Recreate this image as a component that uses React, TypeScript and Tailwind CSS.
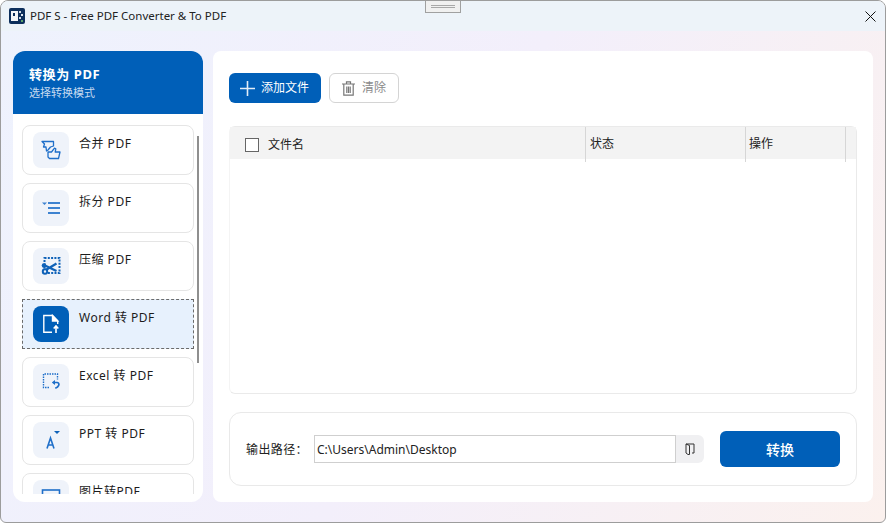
import React from "react";

const font = { fontFamily: '"Noto Sans", "Noto Sans CJK SC", sans-serif' };

const b = "#1f6fc9";

function MergeIcon() {
  return (
    <svg width="20" height="20" viewBox="0 0 20 20" fill="none" stroke={b} strokeWidth="1.300" strokeLinejoin="round">
      <path d="M1 1.500h11.500v4.500l-3 1-2.500 3-1.500 1-.5-4H2.500L3.500 4z" />
      <path d="M7 12h3.500l3-3.800 1.300.6-.6 3.200H19l-1.500 6.500H8.500L7 17z" />
    </svg>
  );
}
function SplitIcon() {
  return (
    <svg width="20" height="20" viewBox="0 0 20 20" fill={b} opacity="0.85">
      <path d="M1 4.500h5l-2.500 2.500z" />
      <rect x="7" y="4" width="12" height="2" />
      <rect x="7" y="9" width="12" height="2" />
      <rect x="7" y="14" width="12" height="2" />
    </svg>
  );
}
function CompressIcon() {
  return (
    <svg width="20" height="20" viewBox="0 0 20 20" fill="none">
      <rect x="3.500" y="2" width="15" height="15" stroke="#0f62b8" strokeWidth="2" strokeDasharray="2 1.300" />
      <path d="M4 14.500 15.500 7.500M4 9.500l11.500 5.500" stroke="#0f62b8" strokeWidth="2.200" />
      <circle cx="3" cy="9.500" r="2.300" fill="#0f62b8" />
      <circle cx="4" cy="15.500" r="2.200" fill="#eff3fa" stroke="#0f62b8" strokeWidth="2" />
    </svg>
  );
}
function WordIcon() {
  return (
    <svg width="20" height="20" viewBox="0 0 20 20" fill="none" stroke="#fff" strokeWidth="1.400">
      <path d="M11 18.300H2.800V1.500h8.700l5.200 5.200V10" />
      <path d="M11.500 1.500v5.500h5.200z" fill="#fff" />
      <path d="M15 19v-7M12.700 14.500l2.300-2.500 2.300 2.500" strokeWidth="1.600" />
    </svg>
  );
}
function ExcelIcon() {
  return (
    <svg width="20" height="20" viewBox="0 0 20 20" fill="none" stroke={b}>
      <path d="M8 15.500H2.500V2H16.500v5.500" strokeWidth="1.400" strokeDasharray="1.500 1" />
      <path d="M12.500 10.500h3.500a1.900 1.900 0 0 1 1.700 2.800c-.6 1.300-1.800 2.300-3.400 3" strokeWidth="1.700" />
      <path d="M14 8 10.800 10.500 14 13z" fill={b} stroke="none" />
    </svg>
  );
}
function PptIcon() {
  return (
    <svg width="20" height="20" viewBox="0 0 20 20" fill="none">
      <path d="M6 18.500 9.500 8 13 18.500M7 15h5" stroke={b} strokeWidth="1.600" />
      <path d="M13 1h6l-3 3z" fill="#0f62b8" />
    </svg>
  );
}
function ImageIcon() {
  return (
    <svg width="20" height="20" viewBox="0 0 20 20" fill="none" stroke={b} strokeWidth="1.600">
      <rect x="1.500" y="2" width="17" height="14" />
    </svg>
  );
}

const items: { label: string; icon: React.ReactNode; active?: boolean }[] = [
  { label: "合并 PDF", icon: <MergeIcon /> },
  { label: "拆分 PDF", icon: <SplitIcon /> },
  { label: "压缩 PDF", icon: <CompressIcon /> },
  { label: "Word 转 PDF", icon: <WordIcon />, active: true },
  { label: "Excel 转 PDF", icon: <ExcelIcon /> },
  { label: "PPT 转 PDF", icon: <PptIcon /> },
  { label: "图片转PDF", icon: <ImageIcon /> },
];

function Item({ label, icon, active }: { label: string; icon: React.ReactNode; active?: boolean }) {
  return (
    <div
      className={
        active
          ? "flex h-[50px] w-[172px] shrink-0 items-start gap-[10px] border border-dashed border-[#6b6b6b] bg-[#e7f1fd] pl-[10px] pt-[6px]"
          : "flex h-[50px] w-[172px] shrink-0 items-start gap-[10px] rounded-lg border border-[#e5e5e5] bg-white pl-[10px] pt-[6px]"
      }
    >
      <div
        className={
          active
            ? "flex h-9 w-9 shrink-0 items-center justify-center rounded-lg bg-[#005fb8]"
            : "flex h-9 w-9 shrink-0 items-center justify-center rounded-lg bg-[#eff3fa]"
        }
      >
        {icon}
      </div>
      <span className="mt-[2px] text-[12px] leading-[20px] tracking-[0.5px] text-[#1c1c1c]">{label}</span>
    </div>
  );
}

export default function App() {
  return (
    <div
      style={font}
      className="relative flex h-[523px] w-[886px] flex-col overflow-hidden rounded-t-lg rounded-b-md border border-[#9c9c9c] bg-[linear-gradient(115deg,#eef2fd_0%,#f3effb_50%,#fbf1ee_100%)]"
    >
      <div className="absolute left-[424px] top-[-1px] flex h-[13px] w-[36px] items-center justify-center border border-[#a0a0a0] bg-[#f0f0f0]">
        <div className="h-[3px] w-6 border-y border-[#a8a8a8]" />
      </div>

      <div className="flex h-[30px] shrink-0 items-center bg-[#edf3f9] pl-2 pr-[9px]">
        <svg width="16" height="16" viewBox="0 0 16 16" className="shrink-0">
          <rect width="16" height="16" rx="2" fill="#0d2f5c" />
          <rect x="2" y="3" width="7" height="10" fill="#f4f6f8" />
          <rect x="4" y="5" width="2" height="3" fill="#0d2f5c" />
          <rect x="10" y="3" width="2" height="2" fill="#cfd8e3" />
          <rect x="12" y="6" width="2" height="2" fill="#dfe6ee" />
          <rect x="10" y="9" width="2" height="2" fill="#cfd8e3" />
          <rect x="12" y="12" width="2" height="2" fill="#5aa36b" />
        </svg>
        <span className="ml-[5px] text-[11.5px] leading-none text-[#222]">PDF S - Free PDF Converter &amp; To PDF</span>
        <svg width="11" height="11" viewBox="0 0 11 11" className="ml-auto" stroke="#111" strokeWidth="1" fill="none">
          <path d="M.5.500l10 10M10.500.500l-10 10" />
        </svg>
      </div>

      <div className="flex min-h-0 flex-1 gap-[10px] pb-5 pl-3 pr-3 pt-5">
        <aside className="flex w-[190px] shrink-0 flex-col overflow-hidden rounded-xl bg-white">
          <div className="flex h-[63px] shrink-0 flex-col bg-[#005fb8] pl-4 pt-[13px]">
            <div className="text-[13px] font-bold leading-[20px] tracking-[0.6px] text-white">转换为 PDF</div>
            <div className="text-[11px] leading-[18px] text-[#c5daf0]">选择转换模式</div>
          </div>
          <div className="relative mb-2 flex min-h-0 flex-1 flex-col gap-2 overflow-hidden pl-[9px] pt-[11px]">
            {items.map((i) => (
              <Item key={i.label} {...i} />
            ))}
            <div className="absolute left-[184px] top-[22px] h-[227px] w-[2px] bg-[#8f8f8f]" />
          </div>
        </aside>

        <main className="flex min-w-0 flex-1 flex-col rounded-lg bg-white px-4 pt-[22px]">
          <div className="flex h-[30px] shrink-0 gap-2">
            <button className="flex w-[92px] items-center rounded-md bg-[#005fb8] pl-[11px] text-[12px] text-white">
              <svg width="15" height="15" viewBox="0 0 15 15" stroke="#e3edf7" strokeWidth="1.600">
                <path d="M7.500 0v15M0 7.500h15" />
              </svg>
              <span className="ml-[6px]">添加文件</span>
            </button>
            <button className="flex w-[70px] items-center rounded-md border border-[#d4d4d4] bg-white pl-3 text-[12px] text-[#8a8a8a]">
              <svg width="13" height="15" viewBox="0 0 13 15" fill="none" stroke="#777" strokeWidth="1.200">
                <path d="M0 3h13M4.500 3V.8h4V3M1.800 3v11.200h9.400V3M4.800 5.500v6.500M6.500 5.500v6.500M8.200 5.500v6.500" />
              </svg>
              <span className="ml-[7px]">清除</span>
            </button>
          </div>

          <div className="mt-[23px] flex h-[268px] shrink-0 flex-col rounded-md border border-[#eaeaea] border-l-[#f4f4f4]">
            <div className="grid h-[32px] grid-cols-[355px_160px_100px_9px] bg-[#f3f3f3] text-[12px] leading-[34px] text-[#222]">
              <div className="flex items-center pl-[15px]">
                <span className="h-[14px] w-[14px] border border-[#666] bg-white" />
                <span className="ml-[9px] pt-[1px]">文件名</span>
              </div>
              <div className="border-l border-[#d6d6d6] pl-1">状态</div>
              <div className="border-l border-[#d6d6d6] pl-[3px]">操作</div>
              <div className="border-l border-[#d6d6d6]" />
            </div>
          </div>

          <div className="mt-[18px] flex h-[74px] shrink-0 items-center rounded-xl border border-[#e9e9e9] pl-4">
            <span className="w-[68px] shrink-0 pt-[1px] text-[12px] tracking-[0.4px] text-[#222]">输出路径：</span>
            <div className="flex h-[28px] w-[362px] shrink-0 items-center border border-[#cfcfcf] pl-[2px] pt-[1px] text-[12px] text-[#222]">
              C:\Users\Admin\Desktop
            </div>
            <button className="flex h-[28px] w-[28px] shrink-0 items-center justify-center rounded-r-md bg-[#f0f0f2]">
              <svg width="10" height="12" viewBox="0 0 10 12" fill="none" stroke="#333" strokeWidth="1">
                <path d="M1 1h8v9H7M1 1v9l2 1.500h1.500V2.500L1 1z" />
              </svg>
            </button>
            <button className="ml-4 h-9 w-[120px] shrink-0 rounded-md bg-[#005fb8] text-[14px] font-medium text-white">
              转换
            </button>
          </div>
        </main>
      </div>
    </div>
  );
}
